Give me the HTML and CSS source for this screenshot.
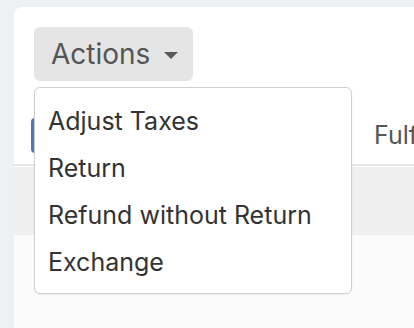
FILE: index.html
```html
<!DOCTYPE html>
<html lang="en">

<head>
    <meta charset="UTF-8">
    <meta name="viewport" content="width=device-width, initial-scale=1.0">
    <title>Order - Actions</title>
    <link rel="stylesheet" href="styles.css">
</head>

<body>

    <div class="card">

        <!-- Barra de acciones -->
        <div class="toolbar">
            <button class="actions-button">
                Actions
                <span class="caret"></span>
            </button>

            <ul class="actions-menu">
                <li>Adjust Taxes</li>
                <li>Return</li>
                <li>Refund without Return</li>
                <li>Exchange</li>
            </ul>
        </div>

        <!-- Pestañas -->
        <div class="tabs">
            <div class="tab tab-active"></div>
            <div class="tab">Fulfillment</div>
        </div>

        <div class="table-head"></div>
        <div class="table-body"></div>

    </div>

</body>

</html>
```

FILE: styles.css
```css
/* Estilos de la página de pedido */
body {
    font-family: 'Inter', 'Liberation Sans', sans-serif;
    background-color: #eef0f4;
    margin: 0;
    padding: 7px 0 0 14px;
    height: 328px;
    box-sizing: border-box;
    overflow: hidden;
}

.card {
    background-color: #ffffff;
    border-top-left-radius: 8px;
    height: 100%;
    overflow: hidden;
}

.toolbar {
    position: relative;
    padding: 20px 0 0 20px;
}

.actions-button {
    display: flex;
    align-items: center;
    gap: 14px;
    height: 54px;
    width: 159px;
    padding: 0 0 0 17px;
    border: none;
    border-radius: 6px;
    background-color: #e5e5e5;
    color: #555555;
    font-family: inherit;
    font-size: 28px;
    cursor: pointer;
}

.caret {
    width: 0;
    height: 0;
    margin-top: 2px;
    border-left: 7px solid transparent;
    border-right: 7px solid transparent;
    border-top: 7px solid #5a5a5a;
}

/* Menú desplegable */
.actions-menu {
    position: absolute;
    top: 80px;
    left: 20px;
    z-index: 10;
    width: 316px;
    margin: 0;
    padding: 10px 0 7px 0;
    list-style: none;
    background-color: #ffffff;
    border: 1.5px solid #cfcfcf;
    border-radius: 6px;
    box-shadow: 0 1px 2px rgba(0, 0, 0, 0.05);
}

.actions-menu li {
    padding-left: 13px;
    line-height: 47px;
    font-size: 25px;
    color: #333333;
}

/* Pestañas */
.tabs {
    display: flex;
    align-items: center;
    gap: 213px;
    padding: 37px 0 11px 17px;
    border-bottom: 2px solid #e6e6e6;
}

.tab {
    height: 35px;
    line-height: 35px;
    font-size: 25px;
    color: #555555;
    white-space: nowrap;
}

.tab-active {
    flex: 0 0 130px;
    border-radius: 4px;
    background-color: #4a7db5;
}

.table-head {
    height: 68px;
    margin-top: 1px;
    background-color: #efefef;
}

.table-body {
    height: 100px;
    background-color: #fbfbfb;
}
```
